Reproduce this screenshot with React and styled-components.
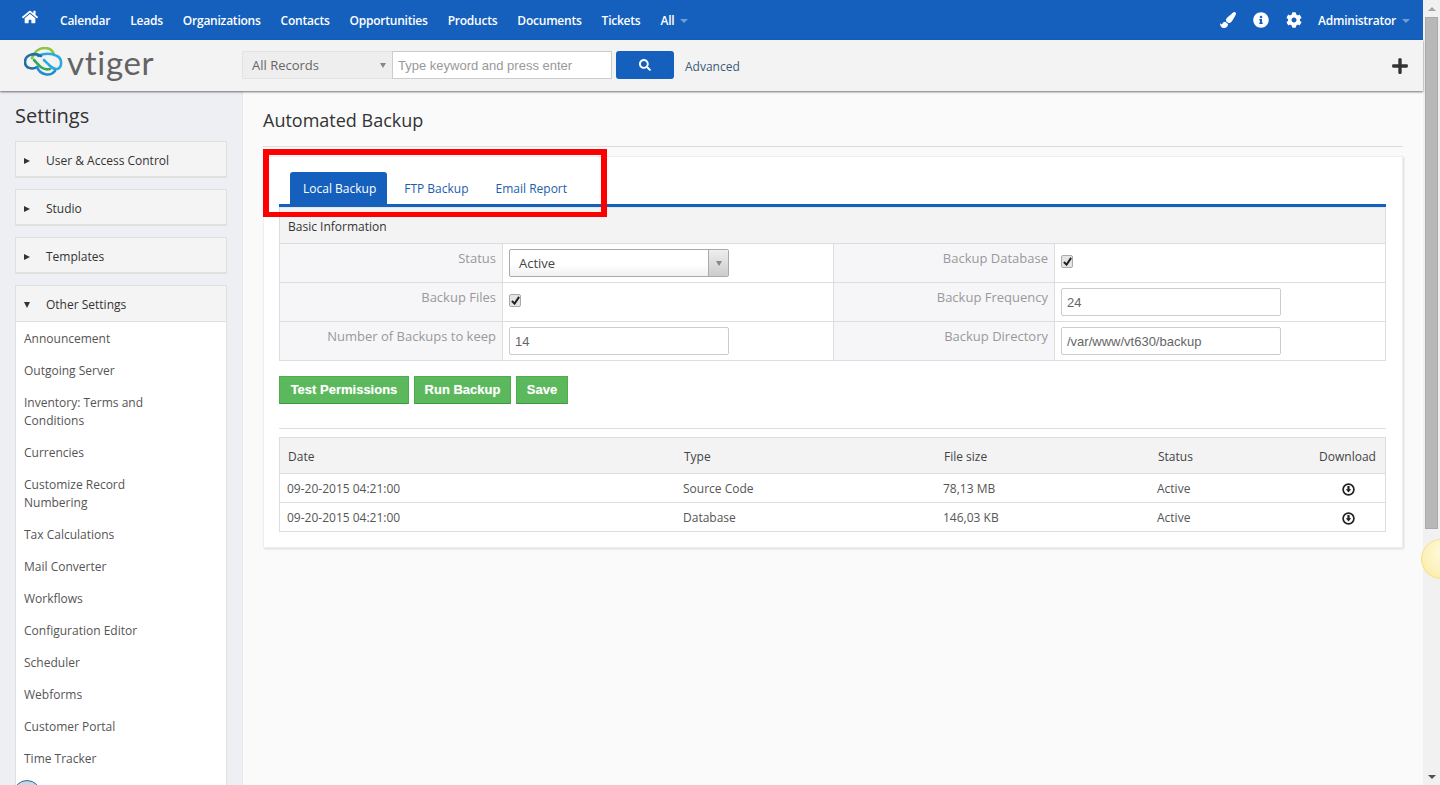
import React from "react";
import styled, { createGlobalStyle } from "styled-components";
import { FaHome, FaPaintBrush, FaInfoCircle, FaCog, FaPlus, FaSearch } from "react-icons/fa";

const Global = createGlobalStyle`
  html, body { margin: 0; height: 100%; overflow: hidden; }
  body { font-family: "Open Sans", "Noto Sans", sans-serif; font-size: 12px; color: #333; }
  * { box-sizing: border-box; }
`;

const Page = styled.div`
  position: relative; display: flex; width: 100vw; height: 100vh; overflow: hidden;
`;
const Frame = styled.div`
  flex: 1; min-width: 0; display: flex; flex-direction: column; background: #fafafa;
`;
const TopBar = styled.div`
  height: 40px; flex: none; background: #1560bd; color: #fff; display: flex; align-items: center;
  padding: 0 13px 0 22px;
`;
const HomeLink = styled.span`
  display: flex; width: 38px; margin-top: -6px; font-size: 16px;
`;
const NavItem = styled.span`
  font-size: 12px; font-weight: 600; letter-spacing: -0.23px; margin-right: 20px; white-space: nowrap;
`;
const Caret = styled.span`
  display: inline-block; width: 0; height: 0; border-left: 4px solid transparent; border-right: 4px solid transparent;
  border-top: 4px solid #6f9ed8; margin-left: 6px; vertical-align: middle;
`;
const Spacer = styled.div`flex: 1;`;
const TopIcon = styled.span`
  display: flex; font-size: 16px; width: ${p => p.$w || 33}px;
`;
const Admin = styled.span`
  font-size: 12px; font-weight: 600; letter-spacing: -0.25px; white-space: nowrap;
`;
const SearchBar = styled.div`
  height: 51px; flex: none; background: #f3f3f3; display: flex; align-items: center; padding: 0 15px 1px 0;
  box-shadow: 0 1px 2px rgba(0,0,0,.55); position: relative; z-index: 2;
`;
const LogoBox = styled.div`
  width: 242px; flex: none; display: flex; align-items: center; padding-left: 24px; height: 100%; gap: 3px; padding-bottom: 6px;
`;
const LogoWord = styled.span`
  font-family: "Lato", sans-serif; font-size: 33px; font-weight: 400; line-height: 1; letter-spacing: 0.7px;
  color: #636363;
`;
const ScopeSelect = styled.div`
  width: 150px; height: 28px; background: #eee; border: 1px solid #e2e2e2; border-right: 0; border-radius: 2px 0 0 2px;
  display: flex; align-items: center; justify-content: space-between; padding: 0 6px 0 9px; font-size: 13px; color: #666;
`;
const SmallArrow = styled.span`
  width: 0; height: 0; border-left: 3.5px solid transparent; border-right: 3.5px solid transparent; border-top: 5px solid #888;
`;
const SearchInput = styled.input`
  width: 220px; height: 28px; border: 1px solid #ccc; background: #fff; padding: 0 5px; margin: 0; outline: 0;
  font-family: "Liberation Sans", Arial, sans-serif; font-size: 13px;
  &::placeholder { color: #999; opacity: 1; }
`;
const SearchButton = styled.button`
  width: 58px; height: 28px; margin-left: 4px; border: 0; border-radius: 3px; background: #1560bd; color: #fff;
  display: flex; align-items: center; justify-content: center; font-size: 12px; padding: 0;
`;
const AdvancedLink = styled.span`
  margin-left: 11px; font-size: 12px; color: #3b5a78; padding-top: 2px;
`;
const Plus = styled.span`
  display: flex; font-size: 18px; color: #333; padding-top: 1px; margin-right: -1px;
`;
const Body = styled.div`
  flex: 1; min-height: 0; display: flex;
`;
const Sidebar = styled.aside`
  position: relative; width: 243px; flex: none; background: #eeeff3; padding: 11px 15px 0; overflow: hidden; border-right: 1px solid #e9e9ec;
`;
const SideTitle = styled.div`
  font-size: 20px; line-height: 28px; color: #333; margin-bottom: 11px;
`;
const SideGroup = styled.div`
  width: 212px; margin-bottom: 11px; border: 1px solid #e0e0e0; border-bottom-width: ${p => p.$open ? "1px" : "2px"};
  background: #fff; ${p => p.$open ? "min-height: 540px;" : ""}
`;
const SideHeader = styled.div`
  height: ${p => p.$open ? "36px" : "34px"}; background: #f4f4f4; display: flex; align-items: center; padding: ${p => p.$open ? "1px" : "2px"} 0 0 8px; color: #333; font-size: 12px;
  border-bottom: ${p => p.$open ? "1px solid #e0e0e0" : "0"};
`;
const SideArrow = styled.span`
  width: 22px; flex: none; display: flex; padding-top: 2px;
`;
const RightTri = styled.span`
  width: 0; height: 0; border-top: 3px solid transparent; border-bottom: 3px solid transparent; border-left: 6px solid #333;
`;
const DownTri = styled.span`
  width: 0; height: 0; border-left: 3px solid transparent; border-right: 3px solid transparent; border-top: 6px solid #333;
`;
const SideLink = styled.div`
  padding: 8px 60px 6px 8px; line-height: 18px; font-size: 12px; color: #555;
`;
const PeekBadge = styled.div`
  position: absolute; left: 13px; top: 689px; width: 28px; height: 28px; border-radius: 50%;
  border: 1px solid #2a6a9c; background: linear-gradient(#c8d3dc, #eef1f4);
`;
const Main = styled.main`
  flex: 1; min-width: 0; padding: 15px 20px 0;
`;
const PageTitle = styled.div`
  font-size: 18px; line-height: 28px; color: #333; padding-bottom: 12px; border-bottom: 1px solid #ddd; margin-bottom: 9px;
`;
const Card = styled.section`
  position: relative; width: 1140px; height: 392px; background: #fff; padding: 15px 16px 0 15px;
  border: 1px solid #eee; box-shadow: 1px 1px 2px rgba(0,0,0,.12);
`;
const Highlight = styled.div`
  position: absolute; left: -1px; top: -8px; width: 344px; height: 68px; border: 6px solid #f00; border-bottom-width: 5px; pointer-events: none; z-index: 3;
`;
const Tabs = styled.div`
  display: flex; height: 35px; padding-left: 11px; border-bottom: 3px solid #1560bd;
`;
const Tab = styled.div`
  height: 32px; padding: ${p => p.$active ? "1px 11px 0 13px" : "1px 14px 0"}; margin-right: ${p => p.$active ? "3px" : "-1px"}; line-height: 32px; font-size: 12px; border-radius: 3px 3px 0 0;
  background: ${p => p.$active ? "#1560bd" : "transparent"}; color: ${p => p.$active ? "#fff" : "#1d5ea8"};
`;
const FormTable = styled.div`
  width: 1107px; border: 1px solid #ddd; border-width: 1px 1px 0; border-top-color: #e6e6e6;
`;
const FormHead = styled.div`
  height: 36px; background: #f3f3f3; border-bottom: 1px solid #ddd; display: flex; align-items: center; padding: 1px 0 0 8px; font-size: 12px; color: #333;
`;
const FormRow = styled.div`
  display: grid; grid-template-columns: 223px 330px 222px 1fr; height: 39px; border-bottom: 1px solid #ddd;
`;
const LabelCell = styled.div`
  background: #f6f6f8; text-align: right; padding: 5px 6px 0 0; font-size: 13px; line-height: 18px; color: #999;
  border-right: 1px solid #ddd; ${p => p.$mid ? "border-left: 1px solid #ddd;" : ""}
`;
const ValueCell = styled.div`
  padding: 5px 0 0 6px;
`;
const FieldInput = styled.input`
  display: block; width: 220px; height: 28px; border: 1px solid #ccc; border-radius: 2px; padding: 0 5px; margin: 0; background: #fff; outline: 0;
  font-family: "Liberation Sans", Arial, sans-serif; font-size: 13px; color: #666;
`;
const StatusSelect = styled.div`
  width: 220px; height: 28px; border: 1px solid #aaa; border-radius: 2px; display: flex; align-items: center;
  background: linear-gradient(#fff 55%, #f0f0f0); font-size: 13px; color: #444; padding-left: 9px; justify-content: space-between;
`;
const SelectBtn = styled.span`
  width: 20px; height: 100%; border-left: 1px solid #aaa; background: linear-gradient(#eee, #ccc); display: flex; align-items: center; justify-content: center;
`;
const Check = styled.span`
  display: flex; align-items: center; justify-content: center; width: 12px; height: 13px; margin-top: 6px; border: 1px solid #aaa; border-radius: 2px; background: #e4e4e4;
`;
const Actions = styled.div`
  display: flex; gap: 5px; margin-top: 15px; padding-bottom: 24px; border-bottom: 1px solid #ddd; width: 1107px;
`;
const GreenButton = styled.button`
  width: ${p => p.$w}px; height: 28px; padding: 0 0 2px; border: 1px solid #4cae4c; border-bottom-color: #3f9a3f; background: #5cb85c; color: #fff; border-radius: 0;
  font-family: "Liberation Sans", Arial, sans-serif; font-weight: 700; font-size: 13px; text-shadow: 0 0 1px rgba(255,255,255,.4);
`;
const BackupTable = styled.div`
  width: 1107px; margin-top: 8px; border: 1px solid #ddd; border-bottom: 0;
`;
const BackupHead = styled.div`
  display: grid; grid-template-columns: 396px 260px 214px 160px 1fr; height: 36px; padding-top: 1px; background: #f3f3f3; border-bottom: 1px solid #ddd; align-items: center;
  font-size: 12px; color: #444;
`;
const HeadCell = styled.div`
  padding-left: 8px; ${p => p.$center ? "padding: 0; text-align: center;" : ""}
`;
const BackupRow = styled.div`
  display: grid; grid-template-columns: 396px 260px 214px 160px 1fr; height: 29px; align-items: center; font-size: 12px; color: #555;
  border-bottom: 1px solid #ddd;
`;
const RowCell = styled.div`
  padding-left: 7px; ${p => p.$center ? "padding: 2px 0 0 2px; display: flex; justify-content: center;" : ""}
`;
const ScrollTrack = styled.div`
  width: 17px; flex: none; background: #f1f1f1; display: flex; flex-direction: column; align-items: center;
`;
const ArrowBtn = styled.div`
  height: 17px; flex: none; display: flex; align-items: center; justify-content: center;
`;
const UpTri = styled.span`
  width: 0; height: 0; border-left: 4px solid transparent; border-right: 4px solid transparent; border-bottom: 4px solid #a3a3a3;
`;
const DownTriDark = styled.span`
  width: 0; height: 0; border-left: 4px solid transparent; border-right: 4px solid transparent; border-top: 4px solid #505050;
`;
const Thumb = styled.div`
  width: 13px; height: 512px; flex: none; background: #b8b8b8; border: 1px solid #aaa;
`;
const ScrollGap = styled.div`flex: 1;`;
const Orb = styled.div`
  position: absolute; left: 1421px; top: 539px; width: 40px; height: 40px; border-radius: 50%;
  background: radial-gradient(circle at 60% 35%, #fffbe2, #fcf1b8 65%, #f9e28c);
  border: 1px solid #f8df8c;
`;

const Logo = () => (
  <svg width="40" height="30" viewBox="0 0 40 30" fill="none" strokeWidth="2.6" strokeLinecap="round">
    <path d="M8 11 C10 5 15 1 21 1 C26 1 29 4 30 8" stroke="#8cc63f" />
    <path d="M10 13 C14 17 18 24 26 22" stroke="#3aa655" />
    <path d="M14 9 C20 6 28 6 33 9 C39 12 38 21 33 22 C29 23 25 18 20 13" stroke="#29a9e0" />
    <path d="M17 9 C10 5 1 8 1 15 C1 21 8 23 13 20" stroke="#1f6fa8" />
    <path d="M13 20 C16 28 26 30 31 24" stroke="#1b8fd0" />
  </svg>
);
const CheckMark = () => (
  <svg width="9" height="9" viewBox="0 0 10 10"><path d="M1 5.5 L4 8.5 L9 1" fill="none" stroke="#222" strokeWidth="2.2" /></svg>
);
const DownloadIcon = () => (
  <svg width="13" height="13" viewBox="0 0 13 13">
    <circle cx="6.5" cy="6.5" r="5.4" fill="#fff" stroke="#222" strokeWidth="1.7" />
    <path d="M5.4 3 H7.6 V6.2 H9.2 L6.5 9.6 L3.8 6.2 H5.4 Z" fill="#222" />
  </svg>
);

const navItems = ["Calendar", "Leads", "Organizations", "Contacts", "Opportunities", "Products", "Documents", "Tickets"];
const closedGroups = ["User & Access Control", "Studio", "Templates"];
const links = ["Announcement", "Outgoing Server", "Inventory: Terms and Conditions", "Currencies", "Customize Record Numbering", "Tax Calculations", "Mail Converter", "Workflows", "Configuration Editor", "Scheduler", "Webforms", "Customer Portal", "Time Tracker"];
const backups = [
  ["09-20-2015 04:21:00", "Source Code", "78,13 MB", "Active"],
  ["09-20-2015 04:21:00", "Database", "146,03 KB", "Active"],
];

export default function App() {
  return (
    <Page>
      <Global />
      <Frame>
        <TopBar>
          <HomeLink><FaHome /></HomeLink>
          {navItems.map(n => <NavItem key={n}>{n}</NavItem>)}
          <NavItem>All<Caret /></NavItem>
          <Spacer />
          <TopIcon><FaPaintBrush /></TopIcon>
          <TopIcon><FaInfoCircle /></TopIcon>
          <TopIcon $w={32}><FaCog /></TopIcon>
          <Admin>Administrator<Caret /></Admin>
        </TopBar>
        <SearchBar>
          <LogoBox><Logo /><LogoWord>vtiger</LogoWord></LogoBox>
          <ScopeSelect>All Records<SmallArrow /></ScopeSelect>
          <SearchInput placeholder="Type keyword and press enter" />
          <SearchButton aria-label="Search"><FaSearch /></SearchButton>
          <AdvancedLink>Advanced</AdvancedLink>
          <Spacer />
          <Plus><FaPlus /></Plus>
        </SearchBar>
        <Body>
          <Sidebar>
            <SideTitle>Settings</SideTitle>
            {closedGroups.map(g => (
              <SideGroup key={g}>
                <SideHeader><SideArrow><RightTri /></SideArrow>{g}</SideHeader>
              </SideGroup>
            ))}
            <SideGroup $open>
              <SideHeader $open><SideArrow><DownTri /></SideArrow>Other Settings</SideHeader>
              {links.map(l => <SideLink key={l}>{l}</SideLink>)}
            </SideGroup>
            <PeekBadge />
          </Sidebar>
          <Main>
            <PageTitle>Automated Backup</PageTitle>
            <Card>
              <Highlight />
              <Tabs>
                <Tab $active>Local Backup</Tab>
                <Tab>FTP Backup</Tab>
                <Tab>Email Report</Tab>
              </Tabs>
              <FormTable>
                <FormHead>Basic Information</FormHead>
                <FormRow>
                  <LabelCell>Status</LabelCell>
                  <ValueCell>
                    <StatusSelect>Active<SelectBtn><SmallArrow /></SelectBtn></StatusSelect>
                  </ValueCell>
                  <LabelCell $mid>Backup Database</LabelCell>
                  <ValueCell><Check><CheckMark /></Check></ValueCell>
                </FormRow>
                <FormRow>
                  <LabelCell>Backup Files</LabelCell>
                  <ValueCell><Check><CheckMark /></Check></ValueCell>
                  <LabelCell $mid>Backup Frequency</LabelCell>
                  <ValueCell><FieldInput defaultValue="24" /></ValueCell>
                </FormRow>
                <FormRow>
                  <LabelCell>Number of Backups to keep</LabelCell>
                  <ValueCell><FieldInput defaultValue="14" /></ValueCell>
                  <LabelCell $mid>Backup Directory</LabelCell>
                  <ValueCell><FieldInput defaultValue="/var/www/vt630/backup" /></ValueCell>
                </FormRow>
              </FormTable>
              <Actions>
                <GreenButton $w={130}>Test Permissions</GreenButton>
                <GreenButton $w={97}>Run Backup</GreenButton>
                <GreenButton $w={52}>Save</GreenButton>
              </Actions>
              <BackupTable>
                <BackupHead>
                  <HeadCell>Date</HeadCell>
                  <HeadCell>Type</HeadCell>
                  <HeadCell>File size</HeadCell>
                  <HeadCell>Status</HeadCell>
                  <HeadCell $center>Download</HeadCell>
                </BackupHead>
                {backups.map(b => (
                  <BackupRow key={b[1]}>
                    {b.map(c => <RowCell key={c}>{c}</RowCell>)}
                    <RowCell $center><DownloadIcon /></RowCell>
                  </BackupRow>
                ))}
              </BackupTable>
            </Card>
          </Main>
        </Body>
      </Frame>
      <ScrollTrack>
        <ArrowBtn><UpTri /></ArrowBtn>
        <Thumb />
        <ScrollGap />
        <ArrowBtn><DownTriDark /></ArrowBtn>
      </ScrollTrack>
      <Orb />
    </Page>
  );
}
